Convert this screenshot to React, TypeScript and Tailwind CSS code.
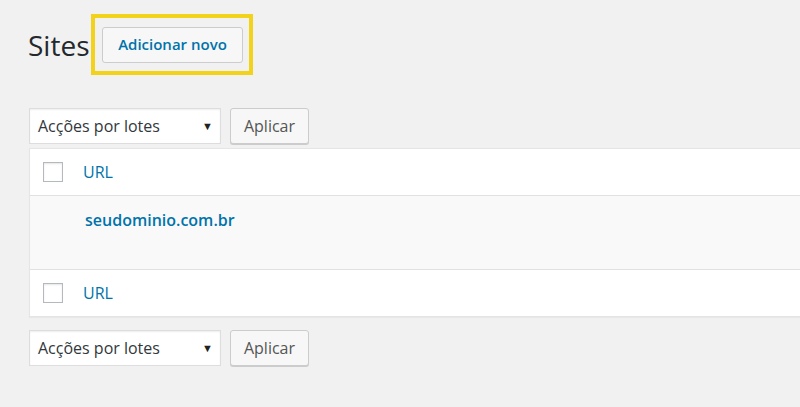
import { useState } from "react";

const font = { fontFamily: '"Open Sans", "Noto Sans", sans-serif' };

function BulkActions() {
  return (
    <div className="flex items-center gap-[9px]">
      <div className="relative flex h-[36px] w-[192px] items-center border border-[#dddddd] bg-white pl-[8px] text-[16px] text-[#32373c] shadow-[inset_0_1px_2px_rgba(0,0,0,0.07)]">
        Acções por lotes
        <span className="absolute right-[7px] top-[9px] text-[11px] text-[#222]">▼</span>
      </div>
      <button className="h-[36px] w-[79px] rounded-[3px] border border-[#cccccc] bg-[#f7f7f7] text-[16px] text-[#555555] shadow-[0_1px_0_#cccccc]">
        Aplicar
      </button>
    </div>
  );
}

function CheckRow({ label }: { label: string }) {
  const [checked, setChecked] = useState(false);
  return (
    <div className="flex h-[46px] items-center bg-white pl-[13px]">
      <button
        onClick={() => setChecked(!checked)}
        className="h-[20px] w-[20px] border border-[#b4b9be] bg-white shadow-[inset_0_1px_2px_rgba(0,0,0,0.1)]"
      />
      <span className="ml-[20px] text-[16px] text-[#0073aa]">{label}</span>
    </div>
  );
}

export default function App() {
  return (
    <main className="h-[407px] overflow-hidden bg-[#f1f1f1] pl-[28px]" style={font}>
      <div className="flex items-center pt-[14px]">
        <h1 className="mr-[2px] text-[28px] leading-none text-[#23282d]">Sites</h1>
        <div className="flex h-[61px] w-[162px] items-center justify-center border-[4px] border-[#f2d21a]">
          <button className="h-[36px] w-[141px] rounded-[3px] border border-[#cccccc] bg-[#f7f7f7] text-[15px] font-semibold text-[#0073aa]">
            Adicionar novo
          </button>
        </div>
      </div>

      <div className="mt-[33px] pl-[1px]">
        <BulkActions />
      </div>

      <div className="ml-[1px] mt-[4px] w-[800px] border border-[#e5e5e5] shadow-[0_1px_1px_rgba(0,0,0,0.04)]">
        <CheckRow label="URL" />
        <div className="h-[75px] border-y border-[#e1e1e1] bg-[#f9f9f9] pl-[55px] pt-[12px] text-[16px] font-semibold text-[#0073aa]">
          seudominio.com.br
        </div>
        <CheckRow label="URL" />
      </div>

      <div className="mt-[13px] pl-[1px]">
        <BulkActions />
      </div>
    </main>
  );
}
